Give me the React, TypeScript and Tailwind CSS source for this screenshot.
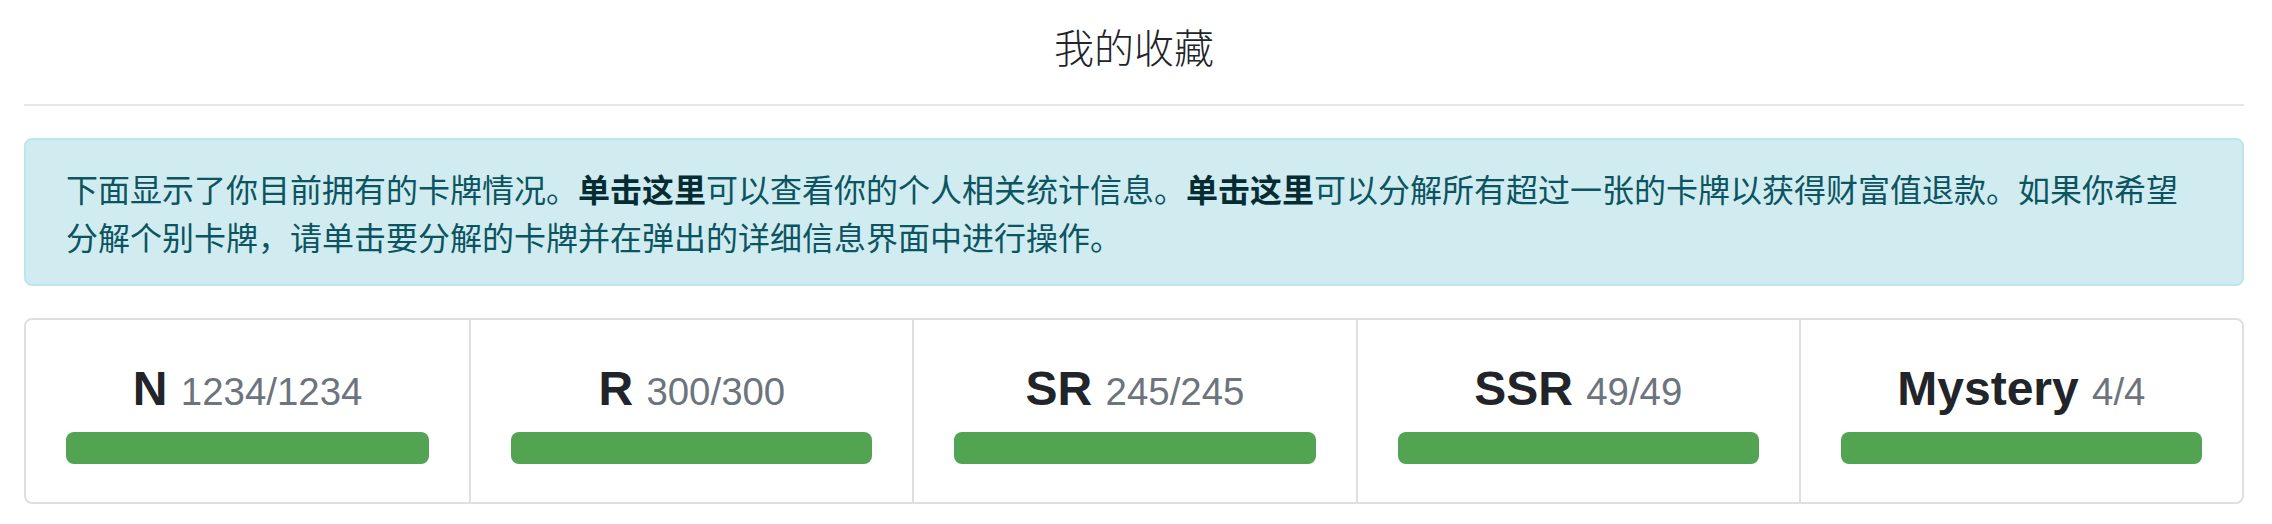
import React from "react";

const cards = [
  { name: "N", count: "1234/1234" },
  { name: "R", count: "300/300" },
  { name: "SR", count: "245/245" },
  { name: "SSR", count: "49/49" },
  { name: "Mystery", count: "4/4" },
];

export default function App() {
  return (
    <div className="w-[2272px] h-[524px] bg-white pl-[24px] pr-[28px] font-['Liberation_Sans','Noto_Sans_CJK_SC',sans-serif] overflow-hidden">
      <h1 className="pt-[22px] text-center text-[40px] leading-[48px] font-light text-[#212529] font-['Noto_Sans_CJK_SC',sans-serif]">
        我的收藏
      </h1>
      <hr className="mt-[34px] mb-[32px] border-0 border-t-2 border-[#e6e6e6]" />
      <div className="rounded-[8px] border-2 border-[#bee5eb] bg-[#d1ecf1] px-[40px] py-[24px] text-[32px] leading-[48px] text-[#0c5460] font-['Noto_Sans_CJK_SC',sans-serif]">
        下面显示了你目前拥有的卡牌情况。
        <b className="font-bold text-[#062c33]">单击这里</b>
        可以查看你的个人相关统计信息。
        <b className="font-bold text-[#062c33]">单击这里</b>
        可以分解所有超过一张的卡牌以获得财富值退款。如果你希望分解个别卡牌，请单击要分解的卡牌并在弹出的详细信息界面中进行操作。
      </div>
      <div className="mt-[32px] grid grid-cols-5 rounded-[8px] border-2 border-[#dfdfdf]">
        {cards.map((c, i) => (
          <div
            key={c.name}
            className={
              "min-w-0 px-[40px] pt-[40px] pb-[38px] " +
              (i > 0 ? "border-l-2 border-[#dfdfdf]" : "")
            }
          >
            <div className="text-center text-[48px] leading-[57.6px] mb-[11px] text-[#212529]">
              <span className="font-bold">{c.name}</span>{" "}
              <span className="text-[38.4px] font-normal text-[#6c757d]">{c.count}</span>
            </div>
            <div className="h-[32px] rounded-[8px] bg-[#52a452]" />
          </div>
        ))}
      </div>
    </div>
  );
}
